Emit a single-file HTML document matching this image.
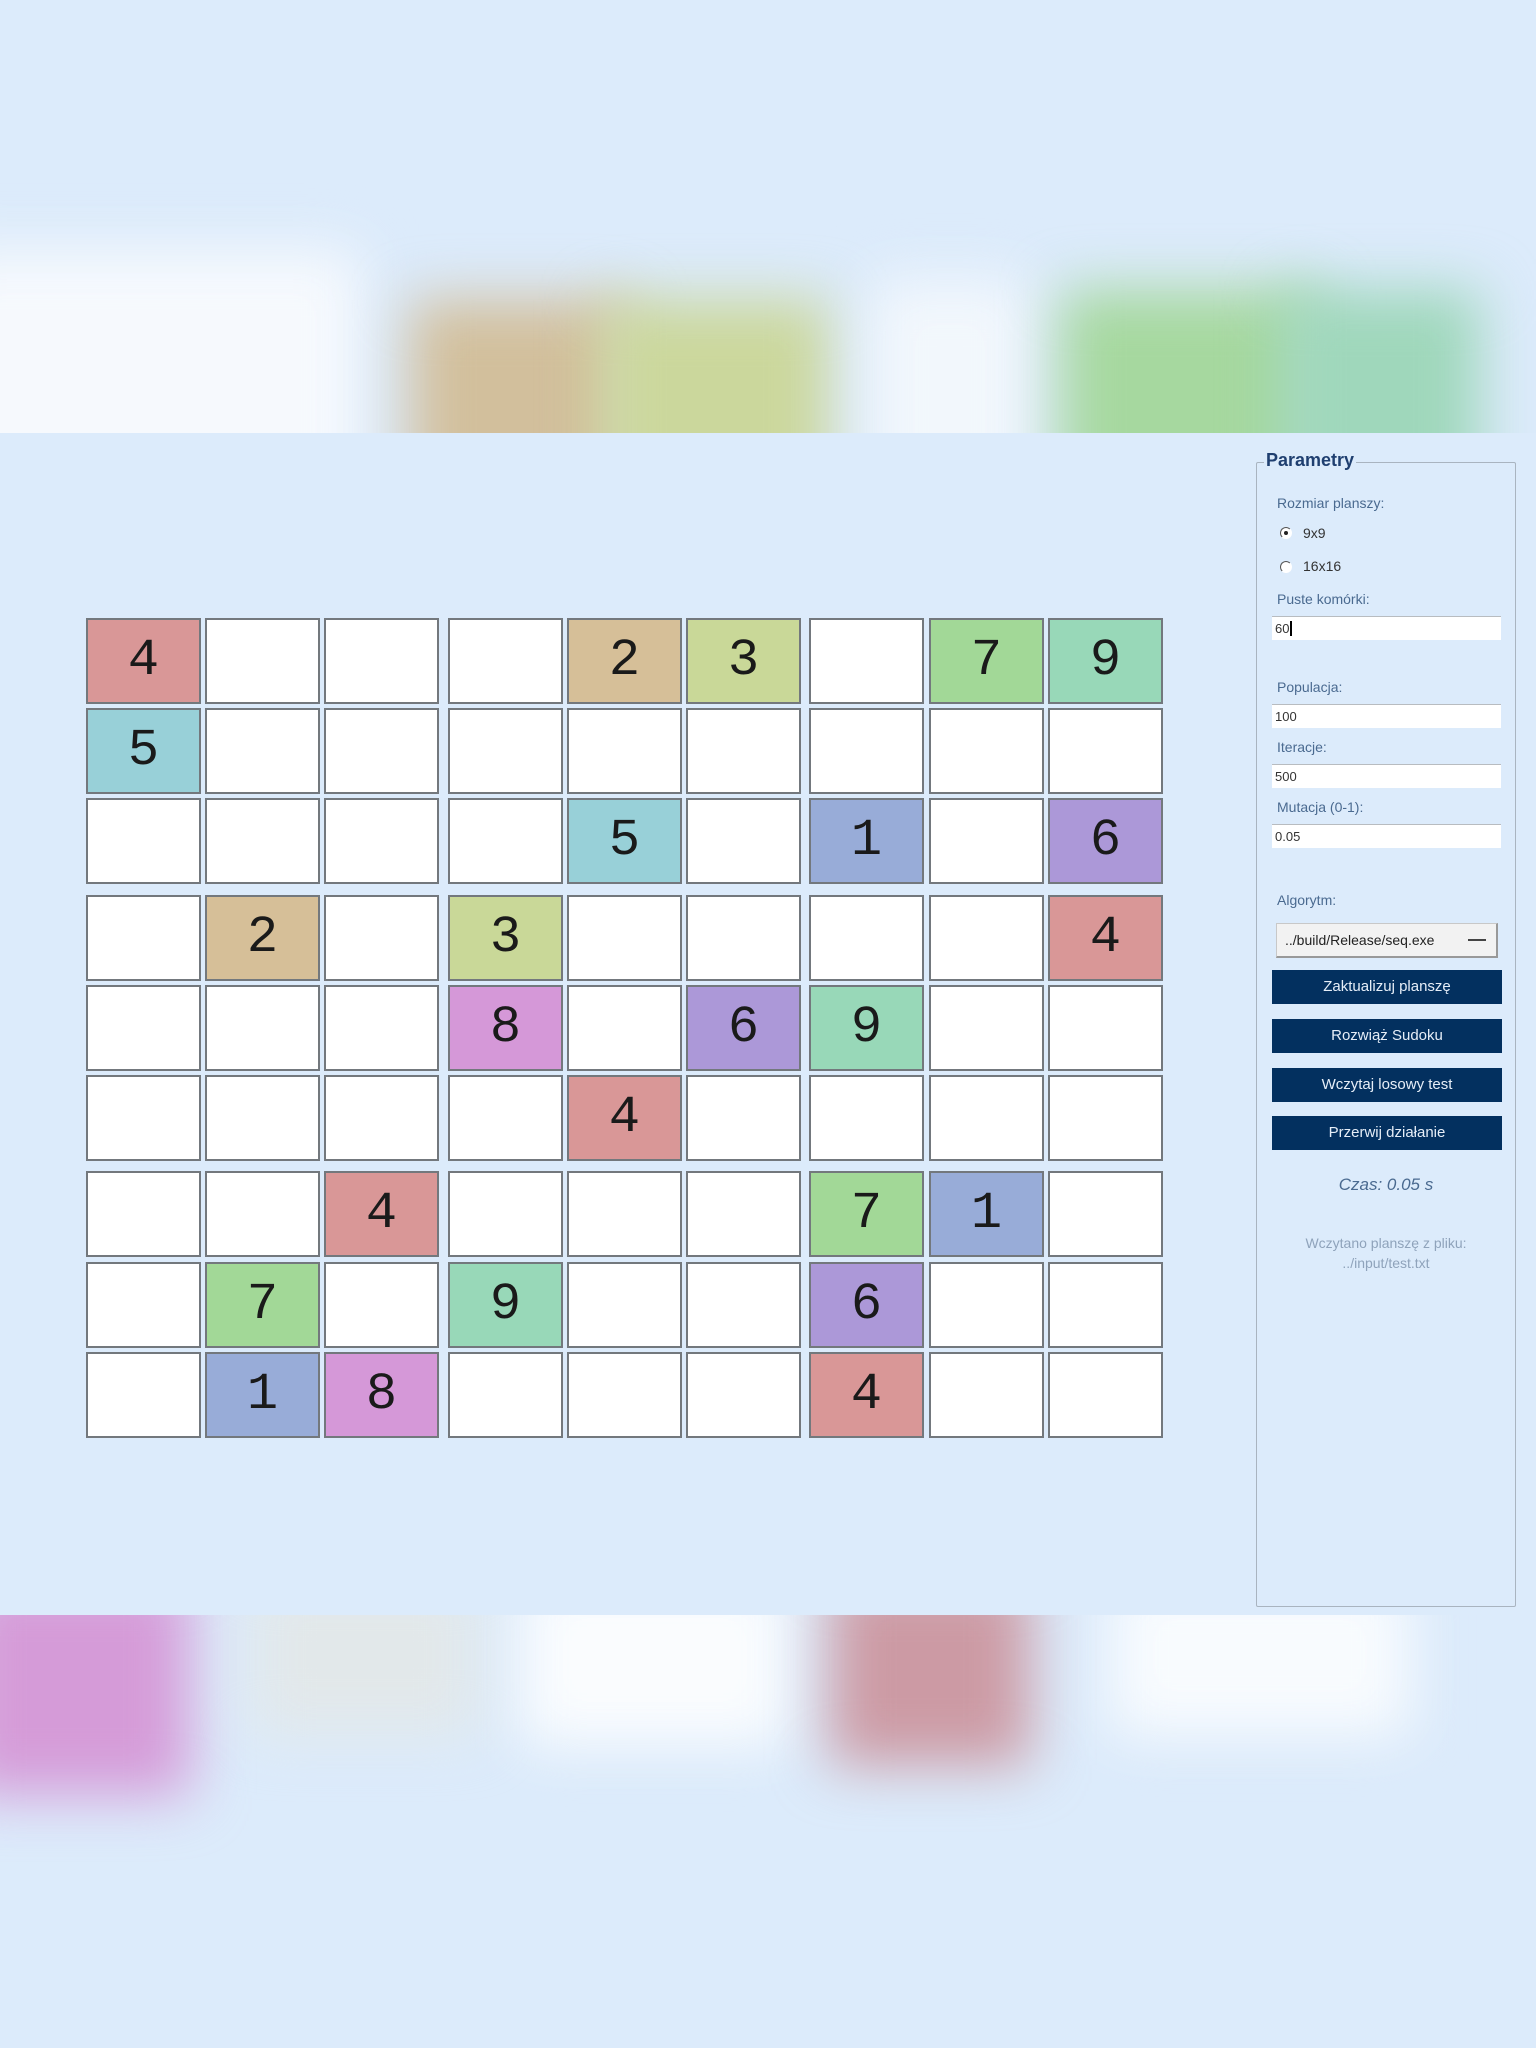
<!DOCTYPE html>
<html><head><meta charset="utf-8"><style>
*{margin:0;padding:0;box-sizing:border-box}
body{width:1536px;height:2048px;background:#dcebfb;position:relative;overflow:hidden;font-family:"Liberation Sans",sans-serif}
.b{position:absolute;filter:blur(28px)}
.c{position:absolute;width:115px;height:86px;background:#fff;border:2px solid #73787d;font-family:"Liberation Mono",monospace;font-size:52px;color:#1a1a1a;text-align:center;line-height:82px}
.r{background:#d99797}.t{background:#d6bf98}.l{background:#c9d898}.g{background:#a2d897}.q{background:#98d8b8}.y{background:#98d0d8}.u{background:#98acd8}.p{background:#ac98d8}.k{background:#d598d8}
.lbl{position:absolute;left:1277px;font-size:14px;color:#4a6a90}
.in{position:absolute;left:1272px;width:229px;height:24px;background:#fff;border-top:1px solid #b8bcc0;font-size:13px;color:#333;padding-left:3px;line-height:23px}
.btn{position:absolute;left:1272px;width:230px;height:34px;background:#03305f;color:#e6eef8;font-size:15px;text-align:center;line-height:34px}
</style></head><body>
<div style="position:absolute;left:0;top:0;width:1536px;height:433px;overflow:hidden">
<div class="b" style="left:-60px;top:250px;width:420px;height:260px;background:#f6f9fd"></div>
<div class="b" style="left:410px;top:300px;width:220px;height:220px;background:#d2bf9c"></div>
<div class="b" style="left:600px;top:300px;width:230px;height:220px;background:#cbd79c"></div>
<div class="b" style="left:870px;top:280px;width:160px;height:240px;background:#f2f7fc"></div>
<div class="b" style="left:1060px;top:290px;width:260px;height:240px;background:#a6d89f"></div>
<div class="b" style="left:1280px;top:290px;width:200px;height:240px;background:#9fd7bb"></div>
</div>
<div style="position:absolute;left:0;top:1615px;width:1536px;height:260px;overflow:hidden">
<div class="b" style="left:-40px;top:-40px;width:230px;height:220px;background:#d59bd8"></div>
<div class="b" style="left:250px;top:-40px;width:230px;height:160px;background:#e2e8ea"></div>
<div class="b" style="left:520px;top:-40px;width:270px;height:170px;background:#fafcfe"></div>
<div class="b" style="left:830px;top:-40px;width:200px;height:190px;background:#cc9aa4"></div>
<div class="b" style="left:1110px;top:-40px;width:300px;height:160px;background:#f8fbfe"></div>
</div>

<div class="c r" style="left:86px;top:618px">4</div><div class="c" style="left:205px;top:618px"></div><div class="c" style="left:324px;top:618px"></div><div class="c" style="left:448px;top:618px"></div><div class="c t" style="left:567px;top:618px">2</div><div class="c l" style="left:686px;top:618px">3</div><div class="c" style="left:809px;top:618px"></div><div class="c g" style="left:929px;top:618px">7</div><div class="c q" style="left:1048px;top:618px">9</div>
<div class="c y" style="left:86px;top:708px">5</div><div class="c" style="left:205px;top:708px"></div><div class="c" style="left:324px;top:708px"></div><div class="c" style="left:448px;top:708px"></div><div class="c" style="left:567px;top:708px"></div><div class="c" style="left:686px;top:708px"></div><div class="c" style="left:809px;top:708px"></div><div class="c" style="left:929px;top:708px"></div><div class="c" style="left:1048px;top:708px"></div>
<div class="c" style="left:86px;top:798px"></div><div class="c" style="left:205px;top:798px"></div><div class="c" style="left:324px;top:798px"></div><div class="c" style="left:448px;top:798px"></div><div class="c y" style="left:567px;top:798px">5</div><div class="c" style="left:686px;top:798px"></div><div class="c u" style="left:809px;top:798px">1</div><div class="c" style="left:929px;top:798px"></div><div class="c p" style="left:1048px;top:798px">6</div>
<div class="c" style="left:86px;top:895px"></div><div class="c t" style="left:205px;top:895px">2</div><div class="c" style="left:324px;top:895px"></div><div class="c l" style="left:448px;top:895px">3</div><div class="c" style="left:567px;top:895px"></div><div class="c" style="left:686px;top:895px"></div><div class="c" style="left:809px;top:895px"></div><div class="c" style="left:929px;top:895px"></div><div class="c r" style="left:1048px;top:895px">4</div>
<div class="c" style="left:86px;top:985px"></div><div class="c" style="left:205px;top:985px"></div><div class="c" style="left:324px;top:985px"></div><div class="c k" style="left:448px;top:985px">8</div><div class="c" style="left:567px;top:985px"></div><div class="c p" style="left:686px;top:985px">6</div><div class="c q" style="left:809px;top:985px">9</div><div class="c" style="left:929px;top:985px"></div><div class="c" style="left:1048px;top:985px"></div>
<div class="c" style="left:86px;top:1075px"></div><div class="c" style="left:205px;top:1075px"></div><div class="c" style="left:324px;top:1075px"></div><div class="c" style="left:448px;top:1075px"></div><div class="c r" style="left:567px;top:1075px">4</div><div class="c" style="left:686px;top:1075px"></div><div class="c" style="left:809px;top:1075px"></div><div class="c" style="left:929px;top:1075px"></div><div class="c" style="left:1048px;top:1075px"></div>
<div class="c" style="left:86px;top:1171px"></div><div class="c" style="left:205px;top:1171px"></div><div class="c r" style="left:324px;top:1171px">4</div><div class="c" style="left:448px;top:1171px"></div><div class="c" style="left:567px;top:1171px"></div><div class="c" style="left:686px;top:1171px"></div><div class="c g" style="left:809px;top:1171px">7</div><div class="c u" style="left:929px;top:1171px">1</div><div class="c" style="left:1048px;top:1171px"></div>
<div class="c" style="left:86px;top:1262px"></div><div class="c g" style="left:205px;top:1262px">7</div><div class="c" style="left:324px;top:1262px"></div><div class="c q" style="left:448px;top:1262px">9</div><div class="c" style="left:567px;top:1262px"></div><div class="c" style="left:686px;top:1262px"></div><div class="c p" style="left:809px;top:1262px">6</div><div class="c" style="left:929px;top:1262px"></div><div class="c" style="left:1048px;top:1262px"></div>
<div class="c" style="left:86px;top:1352px"></div><div class="c u" style="left:205px;top:1352px">1</div><div class="c k" style="left:324px;top:1352px">8</div><div class="c" style="left:448px;top:1352px"></div><div class="c" style="left:567px;top:1352px"></div><div class="c" style="left:686px;top:1352px"></div><div class="c r" style="left:809px;top:1352px">4</div><div class="c" style="left:929px;top:1352px"></div><div class="c" style="left:1048px;top:1352px"></div>

<div style="position:absolute;left:1256px;top:462px;width:260px;height:1145px;border:1px solid #a9b4c0;border-radius:2px"></div>
<div style="position:absolute;left:1264px;top:450px;padding:0 2px;background:#dcebfb;font-size:18px;font-weight:bold;color:#1f3f70">Parametry</div>
<div class="lbl" style="top:495px">Rozmiar planszy:</div>
<div style="position:absolute;left:1280px;top:527px;width:12px;height:12px;border-radius:50%;border:1.5px solid #555;border-right-color:#fff;border-bottom-color:#fff;background:#fff"></div>
<div style="position:absolute;left:1284px;top:531px;width:4px;height:4px;border-radius:50%;background:#222"></div>
<div style="position:absolute;left:1303px;top:525px;font-size:14px;color:#333">9x9</div>
<div style="position:absolute;left:1280px;top:561px;width:12px;height:12px;border-radius:50%;border:1.5px solid #555;border-right-color:#fff;border-bottom-color:#fff;background:#fff"></div>
<div style="position:absolute;left:1303px;top:558px;font-size:14px;color:#333">16x16</div>
<div class="lbl" style="top:591px">Puste komórki:</div>
<div class="in" style="top:616px">60<span style="border-left:2px solid #000;margin-left:1px"></span></div>
<div class="lbl" style="top:679px">Populacja:</div>
<div class="in" style="top:704px">100</div>
<div class="lbl" style="top:739px">Iteracje:</div>
<div class="in" style="top:764px">500</div>
<div class="lbl" style="top:799px">Mutacja (0-1):</div>
<div class="in" style="top:824px">0.05</div>
<div class="lbl" style="top:892px">Algorytm:</div>
<div style="position:absolute;left:1276px;top:923px;width:222px;height:35px;background:#f2f2f2;border:1px solid #c8c8c8;border-right:2px solid #999;border-bottom:2px solid #999;font-size:14px;color:#222;line-height:32px;padding-left:8px">../build/Release/seq.exe<span style="position:absolute;right:10px;top:15px;width:18px;height:2px;background:#444"></span></div>
<div class="btn" style="top:970px">Zaktualizuj planszę</div>
<div class="btn" style="top:1019px">Rozwiąż Sudoku</div>
<div class="btn" style="top:1068px">Wczytaj losowy test</div>
<div class="btn" style="top:1116px">Przerwij działanie</div>
<div style="position:absolute;left:1256px;width:260px;top:1175px;text-align:center;font-size:17px;font-style:italic;color:#4a6a90">Czas: 0.05 s</div>
<div style="position:absolute;left:1256px;width:260px;top:1233px;text-align:center;font-size:14px;color:#8fa3bb;line-height:20px">Wczytano planszę z pliku:<br>../input/test.txt</div>
</body></html>
